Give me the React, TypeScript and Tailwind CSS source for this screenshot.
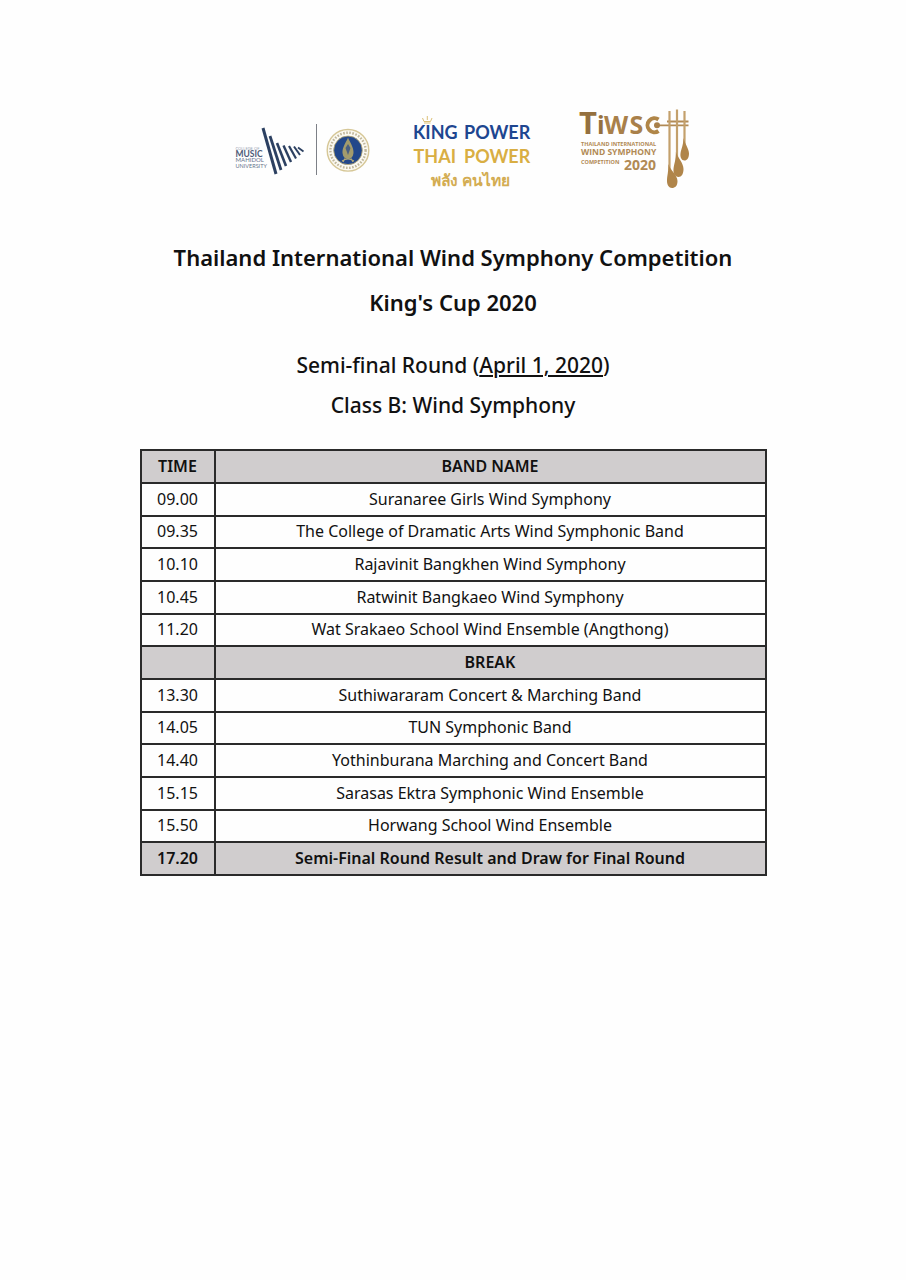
import React from "react";

type Row = { time: string; name: string; shaded?: boolean };

const rows: Row[] = [
  { time: "09.00", name: "Suranaree Girls Wind Symphony" },
  { time: "09.35", name: "The College of Dramatic Arts Wind Symphonic Band" },
  { time: "10.10", name: "Rajavinit Bangkhen Wind Symphony" },
  { time: "10.45", name: "Ratwinit Bangkaeo Wind Symphony" },
  { time: "11.20", name: "Wat Srakaeo School Wind Ensemble (Angthong)" },
  { time: "", name: "BREAK", shaded: true },
  { time: "13.30", name: "Suthiwararam Concert & Marching Band" },
  { time: "14.05", name: "TUN Symphonic Band" },
  { time: "14.40", name: "Yothinburana Marching and Concert Band" },
  { time: "15.15", name: "Sarasas Ektra Symphonic Wind Ensemble" },
  { time: "15.50", name: "Horwang School Wind Ensemble" },
  { time: "17.20", name: "Semi-Final Round Result and Draw for Final Round", shaded: true },
];

const bars = [
  [263, 128, 276, 174, 3],
  [270, 136, 281, 170, 2.8],
  [277, 143, 286, 166, 2.6],
  [283.5, 145.5, 291, 162, 2.4],
  [289, 146, 296, 158.5, 2.2],
  [294, 146.5, 300, 155, 2],
  [298, 147.5, 303.5, 151.5, 1.8],
];

function MahidolLogo() {
  return (
    <svg viewBox="232 120 140 60" className="h-[60px] w-[140px]" role="img" aria-label="College of Music, Mahidol University">
      <g fontFamily="Lato, sans-serif" fill="#66738c">
        <text x="235.5" y="149.500" fontSize="4" fill="#9aa3b4">COLLEGE OF</text>
        <text x="235.5" y="156.500" fontSize="8.500" fontWeight="700" fill="#4d5b78">MUSIC</text>
        <text x="235.5" y="162" fontSize="6" fontWeight="400">MAHIDOL</text>
        <text x="235.5" y="167.5" fontSize="5.500" fontWeight="400">UNIVERSITY</text>
      </g>
      {bars.map(([x1, y1, x2, y2, w]) => (
        <line key={x1} x1={x1} y1={y1} x2={x2} y2={y2} strokeWidth={w} stroke="#2c4061" />
      ))}
      <line x1="316.5" y1="124" x2="316.5" y2="175" stroke="#7d8087" />
      <circle cx="348" cy="150.3" r="20.8" fill="#fbf9f1" stroke="#d6c797" strokeWidth="1.4" />
      <circle cx="348" cy="150.3" r="17.6" fill="none" stroke="#c0b79b" strokeWidth="2.4" strokeDasharray="1.6 1.5" />
      <circle cx="348" cy="150.3" r="14.3" fill="#22478a" stroke="#b9a970" strokeWidth="0.8" />
      <path d="M348 137.500C349 141 354 147 353.500 153C353 157 351 159 348 159C345 159 343 157 342.500 153C342 147 347 141 348 137.500Z" fill="#a39b6c" />
      <path d="M345.500 148L348 144L350.500 148L348 155Z" fill="#4a5f80" />
      <path d="M342 161Q348 157 354 161M345 158.500L343 162M351 158.500L353 162" fill="none" stroke="#b3a978" strokeWidth="1.2" />
    </svg>
  );
}

function KingPowerLogo() {
  return (
    <svg viewBox="408 110 124 82" className="h-[82px] w-[124px]" role="img" aria-label="King Power Thai Power">
      <path d="M422.500 118L424 121.500H430.500L432 118M427.300 116V120M424 123H430.500" fill="none" stroke="#dcc078" />
      <g fontFamily="Lato, sans-serif" fontWeight="700" fontSize="18">
        <text x="413" y="139.300" fill="#1e4690">KING</text>
        <text x="464" y="139.300" fill="#1e4690">POWER</text>
        <text x="413.500" y="162.700" fill="#d9ae43">THAI</text>
        <text x="464" y="162.700" fill="#d9ae43">POWER</text>
      </g>
      <text x="470.500" y="186" textAnchor="middle" fontFamily="Noto Sans, sans-serif" fontWeight="700" fontSize="15.500" fill="#d3ac52">พลัง คนไทย</text>
    </svg>
  );
}

function TiwscLogo() {
  return (
    <svg viewBox="574 100 120 92" className="h-[92px] w-[120px]" role="img" aria-label="Thailand International Wind Symphony Competition 2020">
      <g fontFamily="Open Sans, sans-serif" fontWeight="700" fill="#a9804a">
        <text x="579" y="134" fontSize="31" fill="#94703f">T</text>
        <text x="597" y="134" fontSize="25" fill="#94703f">i</text>
        <text x="604" y="134" fontSize="25">W</text>
        <text x="629.500" y="134" fontSize="25">S</text>
      </g>
      <g fontFamily="Open Sans, sans-serif" fontWeight="700" fill="#b18a55">
        <text x="581" y="146" fontSize="5.500">THAILAND INTERNATIONAL</text>
        <text x="581" y="155" fontSize="8.500">WIND SYMPHONY</text>
        <text x="581" y="164" fontSize="5.500">COMPETITION</text>
        <text x="624" y="170" fontSize="14">2020</text>
      </g>
      <path d="M658.500 119.500A7 7 0 1 0 658.500 131" fill="none" strokeWidth="4" stroke="#b08648" />
      <path d="M655 125.300H688.500M667 121.500H688.500" fill="none" stroke="#b18a55" strokeWidth="1.800" />
      <path d="M669.500 111V170M677 109.500V160M684.500 111V148" fill="none" strokeWidth="2.200" stroke="#c3a06c" />
      <circle cx="657" cy="125.300" r="3" fill="#a87f49" />
      <g fill="#b0854a">
        <path d="M668.400 164C670 170 677.500 175 677.500 181C677.500 186 675 188 672 188C669 188 667 185 667 181C667 176 668.500 172 668.400 164Z" />
        <path d="M675.900 152C678 158 683.500 163 683.500 169C683.500 174 681.500 177 678.500 177C675 177 673 173 673.500 169C674 164 676 160 675.900 152Z" />
        <path d="M683.400 138C685 144 689 149 689 153.500C689 158 687 160.500 684.500 160.500C681.500 160.500 680 157 680.500 153.500C681 149 683.500 145 683.400 138Z" />
      </g>
    </svg>
  );
}

const cell = "border-2 border-[#2a2a2a] px-0 pt-0 pb-px";

export default function App() {
  return (
    <main className="min-h-screen bg-[#fefefe] px-8 pt-[100px] pb-16 font-['Noto_Sans',sans-serif] text-[#111]">
      <header className="flex items-start justify-center pl-5">
        <div className="pt-5"><MahidolLogo /></div>
        <div className="ml-9 pt-[10px]"><KingPowerLogo /></div>
        <div className="ml-[42px]"><TiwscLogo /></div>
      </header>
      <section className="mt-[43px] text-center">
        <h1 className="text-[22px] leading-[45px] font-semibold">
          Thailand International Wind Symphony Competition
          <br />
          King's Cup 2020
        </h1>
        <h2 className="mt-5 text-[21px] leading-10 font-medium">
          Semi-final Round (<span className="underline decoration-2 underline-offset-2">April 1, 2020</span>)
          <br />
          Class B: Wind Symphony
        </h2>
      </section>
      <table className="mx-auto mt-6 w-full max-w-[627px] table-fixed border-collapse text-center text-base leading-6">
        <thead>
          <tr className="h-[33px] bg-[#d0cdce]">
            <th className={`w-[74px] ${cell} font-semibold`}>TIME</th>
            <th className={`${cell} font-semibold`}>BAND NAME</th>
          </tr>
        </thead>
        <tbody className="h-[392px]">
          {rows.map((row) => (
            <tr key={row.name} className={row.shaded ? "bg-[#d0cdce] font-semibold" : ""}>
              <td className={cell}>{row.time}</td>
              <td className={cell}>{row.name}</td>
            </tr>
          ))}
        </tbody>
      </table>
    </main>
  );
}
